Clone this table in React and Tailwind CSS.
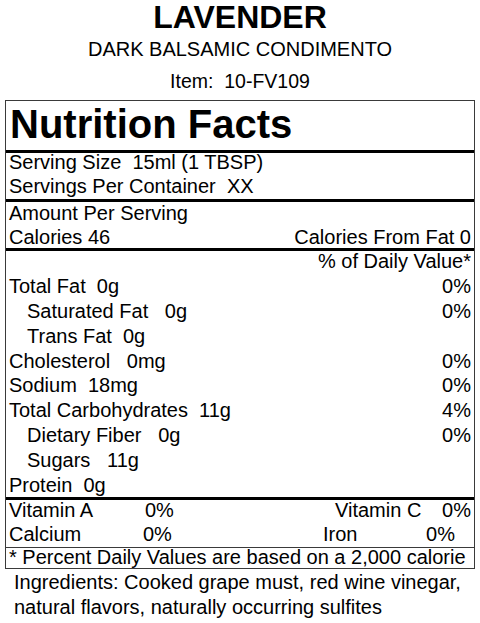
const nutrients = [
  { label: 'Total Fat  0g', dv: '0%' },
  { label: 'Saturated Fat   0g', dv: '0%', sub: true },
  { label: 'Trans Fat  0g', dv: '', sub: true },
  { label: 'Cholesterol   0mg', dv: '0%' },
  { label: 'Sodium  18mg', dv: '0%' },
  { label: 'Total Carbohydrates  11g', dv: '4%' },
  { label: 'Dietary Fiber   0g', dv: '0%', sub: true },
  { label: 'Sugars   11g', dv: '', sub: true },
];

function Row({ left, right, className = '' }) {
  return (
    <div className={`flex justify-between whitespace-pre leading-[18px] ${className}`}>
      <span>{left}</span>
      <span>{right}</span>
    </div>
  );
}

export default function App() {
  return (
    <div className="w-[480px] h-[623px] overflow-hidden bg-white text-black font-['Liberation_Sans',Arial,sans-serif]">
      <div className="text-center">
        <div className="text-[32px] font-bold leading-[34px]">LAVENDER</div>
        <div className="text-[20px] leading-[30px]">DARK BALSAMIC CONDIMENTO</div>
        <div className="text-[19.5px] leading-[35px] whitespace-pre">Item:  10-FV109</div>
      </div>

      <div className="mx-[5px] mt-[1px] border border-[#3a3a3a] text-[20px]">
        <div className="h-[49px] pl-[4px] text-[40px] font-bold leading-[46px]">Nutrition Facts</div>
        <div className="h-[3px] bg-black" />

        <div className="pl-[3px] pr-[3px]">
          <Row left="Serving Size  15ml (1 TBSP)" className="h-[24px]" />
          <Row left="Servings Per Container  XX" className="h-[22px]" />
        </div>
        <div className="h-[3px] bg-black" />

        <div className="pl-[3px] pr-[3px] pt-[2px]">
          <Row left="Amount Per Serving" className="h-[24px]" />
          <Row left="Calories 46" right="Calories From Fat 0" className="h-[20px]" />
        </div>
        <div className="h-[3px] bg-black" />

        <div className="pl-[3px] pr-[3px] pt-[1px]">
          <Row right="% of Daily Value*" className="h-[24.9px]" />
          {nutrients.map((n) => (
            <Row
              key={n.label}
              left={n.label}
              right={n.dv}
              className={`h-[24.9px] ${n.sub ? 'pl-[18px]' : ''}`}
            />
          ))}
          <Row left="Protein  0g" className="h-[20.9px]" />
        </div>
        <div className="h-[3px] bg-black" />

        <div className="pl-[3px] pr-[3px] pt-[1px] leading-[18px] whitespace-pre">
          <div className="flex h-[24.5px]">
            <span className="w-[136px]">Vitamin A</span>
            <span className="w-[190px]">0%</span>
            <span>Vitamin C</span>
            <span className="flex-1 text-right">0%</span>
          </div>
          <div className="flex h-[21.5px]">
            <span className="w-[134px]">Calcium</span>
            <span className="w-[180px]">0%</span>
            <span>Iron</span>
            <span className="flex-1 pr-[16px] text-right">0%</span>
          </div>
        </div>
        <div className="h-[1px] bg-[#3a3a3a]" />

        <div className="h-[20px] pl-[3px] leading-[18px] whitespace-pre">
          * Percent Daily Values are based on a 2,000 calorie
        </div>
      </div>

      <div className="pl-[14px] pt-[1px] text-[20px] leading-[25px]">
        <div>Ingredients: Cooked grape must, red wine vinegar,</div>
        <div>natural flavors, naturally occurring sulfites</div>
      </div>
    </div>
  );
}
